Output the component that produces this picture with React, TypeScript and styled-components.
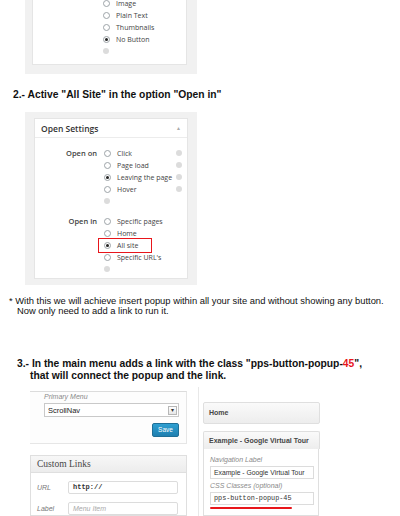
import styled, { createGlobalStyle } from 'styled-components'

const GlobalStyle = createGlobalStyle`
  html, body {
    margin: 0;
    padding: 0;
    background: #ffffff;
  }
  body {
    font-family: "Liberation Sans", Arial, sans-serif;
    color: #111;
  }
`

const Page = styled.div`
  width: 400px;
  height: 516px;
  overflow: hidden;
  background: #fff;
`

// gray frame around each captured admin screenshot
const Frame = styled.div<{ $pad: string; $top?: number }>`
  width: 172px;
  box-sizing: border-box;
  margin-left: 25px;
  margin-top: ${p => p.$top ?? 0}px;
  padding: ${p => p.$pad};
  background: #f1f1f1;
`

const Panel = styled.div<{ $cropped?: boolean }>`
  background: #fff;
  border: 1px solid #e5e5e5;
  border-top: ${p => (p.$cropped ? 'none' : '1px solid #e5e5e5')};
  font-family: "Open Sans", "Noto Sans", sans-serif;
  color: #444;
`

const OptionList = styled.div`
  padding: 0 0 7px 70px;
`

const Row = styled.div<{ $h?: number }>`
  display: flex;
  align-items: center;
  height: ${p => p.$h ?? 12}px;
  font-size: 7px;
`

const Radio = styled.span<{ $checked?: boolean }>`
  flex: none;
  width: 7px;
  height: 7px;
  box-sizing: border-box;
  border-radius: 50%;
  border: 1px solid #9da3a8;
  background: #fff;
  display: inline-flex;
  align-items: center;
  justify-content: center;
  &::after {
    content: '';
    width: 3px;
    height: 3px;
    border-radius: 50%;
    background: ${p => (p.$checked ? '#222' : 'transparent')};
  }
`

const Choice = styled.span<{ $marked?: boolean }>`
  position: relative;
  display: inline-flex;
  align-items: center;
  gap: 6px;
  white-space: nowrap;
  ${p =>
    p.$marked &&
    `
    &::before {
      content: '';
      position: absolute;
      left: -6px;
      right: -14px;
      top: -3px;
      bottom: -3px;
      border: 1.5px solid #e8161b;
    }
  `}
`

const Help = styled.span<{ $push?: boolean }>`
  flex: none;
  width: 6px;
  height: 6px;
  border-radius: 50%;
  background: #dcdcdc;
  margin-left: ${p => (p.$push ? 'auto' : '0')};
`

const PanelHead = styled.div`
  display: flex;
  align-items: center;
  justify-content: space-between;
  height: 18px;
  padding: 0 6px;
  border-bottom: 1px solid #ececec;
  font-size: 8.5px;
  font-weight: 600;
  color: #333;
`

const Caret = styled.span`
  font-size: 5px;
  color: #aaa;
`

const PanelBody = styled.div`
  padding: 9px 5px 3px 0;
`

const Group = styled.div<{ $gap?: number }>`
  display: grid;
  grid-template-columns: 62px 1fr;
  column-gap: 7px;
  margin-top: ${p => p.$gap ?? 0}px;
`

const GroupLabel = styled.div`
  text-align: right;
  font-size: 7.5px;
  font-weight: 600;
  color: #444;
  line-height: 12px;
`

const Heading = styled.div<{ $top: number }>`
  margin-top: ${p => p.$top}px;
  padding-left: 30px;
  text-indent: -13px;
  font-size: 10.3px;
  line-height: 12px;
  font-weight: 700;
  color: #111;
`

const StepTitle = styled.div`
  margin-top: 14px;
  padding-left: 13px;
  font-size: 10.3px;
  line-height: 14px;
  font-weight: 700;
  color: #111;
`

const Note = styled.div`
  margin-top: 11px;
  padding-left: 17px;
  text-indent: -8px;
  font-size: 9.4px;
  line-height: 9.5px;
  color: #111;
  white-space: nowrap;
`

const Red = styled.span`
  color: #e8161b;
`

const Bottom = styled.div`
  display: flex;
  margin-top: 5px;
  height: 140px;
`

const LeftCol = styled.div`
  width: 157px;
  margin-left: 30px;
  font-family: "Liberation Sans", Arial, sans-serif;
`

const MenuBox = styled.div`
  margin-top: 4px;
  border-top: 1px solid #dcdcdc;
  border-right: 1px solid #e6e6e6;
  border-bottom: 1px solid #e6e6e6;
  padding: 1px 7px 6px 14px;
  background: #fdfdfd;
  display: flex;
  flex-direction: column;
`

const SmallLabel = styled.div<{ $italic?: boolean }>`
  font-size: 7px;
  line-height: 8px;
  font-style: ${p => (p.$italic ? 'italic' : 'normal')};
  color: #8a8a8a;
  white-space: nowrap;
`

const Select = styled.div`
  display: flex;
  align-items: center;
  justify-content: space-between;
  height: 12px;
  margin-top: 2px;
  padding: 0 1px 0 3px;
  border: 1px solid #c9c9c9;
  background: #fff;
  font-size: 7.5px;
  color: #222;
`

const SelectArrow = styled.span`
  width: 9px;
  height: 9px;
  border: 1px solid #b7b7b7;
  box-sizing: border-box;
  background: linear-gradient(#fff, #e6e6e6);
  font-size: 6px;
  line-height: 7px;
  text-align: center;
  color: #333;
`

const SaveButton = styled.div`
  align-self: flex-end;
  margin-top: 6px;
  width: 27px;
  height: 14px;
  border-radius: 2px;
  border: 1px solid #1f6f97;
  box-sizing: border-box;
  background: linear-gradient(#2e9fd1, #1f7fb0);
  color: #fff;
  font-size: 6.5px;
  line-height: 12px;
  text-align: center;
`

const LinksBox = styled.div`
  margin-top: 11px;
  border: 1px solid #dfdfdf;
  background: #fff;
`

const LinksHead = styled.div`
  height: 16px;
  padding-left: 6px;
  background: linear-gradient(#f7f7f7, #ececec);
  border-bottom: 1px solid #dfdfdf;
  font-family: "Liberation Serif", "DejaVu Serif", serif;
  font-size: 9.5px;
  line-height: 16px;
  color: #464646;
`

const FieldRow = styled.div`
  display: flex;
  align-items: center;
  margin-top: 8px;
  padding-left: 6px;
  padding-right: 8px;
`

const FieldLabel = styled.span`
  width: 31px;
  font-size: 7px;
  font-style: italic;
  color: #777;
`

const Input = styled.div<{ $mono?: boolean; $placeholder?: boolean }>`
  flex: 1;
  height: 13px;
  box-sizing: border-box;
  border: 1px solid #dcdcdc;
  border-radius: 2px;
  background: #fff;
  padding-left: 4px;
  white-space: nowrap;
  overflow: hidden;
  font-family: ${p =>
    p.$mono ? '"Liberation Mono", "DejaVu Sans Mono", monospace' : '"Liberation Sans", Arial, sans-serif'};
  font-weight: ${p => (p.$mono ? 700 : 400)};
  font-style: ${p => (p.$placeholder ? 'italic' : 'normal')};
  font-size: 7px;
  line-height: 11px;
  color: ${p => (p.$placeholder ? '#aaa' : '#333')};
`

const RightCol = styled.div`
  width: 122px;
  margin-left: 11px;
  border-left: 1px solid #e8e8e8;
  padding-left: 4px;
  box-sizing: border-box;
  font-family: "Liberation Sans", Arial, sans-serif;
`

const MenuItem = styled.div<{ $top: number; $open?: boolean }>`
  margin-top: ${p => p.$top}px;
  height: ${p => (p.$open ? 18 : 22)}px;
  box-sizing: border-box;
  border: 1px solid #dfdfdf;
  border-bottom: ${p => (p.$open ? 'none' : '1px solid #dfdfdf')};
  border-radius: 2px 2px ${p => (p.$open ? '0 0' : '2px 2px')};
  background: linear-gradient(#fafafa, #ededed);
  padding-left: 5px;
  font-size: 7px;
  font-weight: 700;
  line-height: ${p => (p.$open ? 17 : 20)}px;
  color: #464646;
  white-space: nowrap;
`

const ItemSettings = styled.div`
  border: 1px solid #dfdfdf;
  border-top: none;
  background: #fff;
  padding: 7px 4px 10px 6px;
  margin-right: 1px;
`

const SettingLabel = styled(SmallLabel)`
  margin-top: 3px;
  &:first-child {
    margin-top: 0;
  }
`

const SettingInput = styled(Input)`
  margin-top: 2px;
  height: 13px;
  padding-left: 3px;
  border-radius: 0;
  font-weight: 400;
  font-size: 6.8px;
`

const Underlined = styled.div`
  position: relative;
  &::after {
    content: '';
    position: absolute;
    left: 0;
    bottom: -4px;
    width: 82px;
    height: 2px;
    border-radius: 1px;
    background: #e8161b;
  }
`

type Opt = { label: string; checked?: boolean; help?: boolean; marked?: boolean }

const openOn: Opt[] = [
  { label: 'Click', help: true },
  { label: 'Page load', help: true },
  { label: 'Leaving the page', checked: true, help: true },
  { label: 'Hover', help: true },
]

const openIn: Opt[] = [
  { label: 'Specific pages' },
  { label: 'Home' },
  { label: 'All site', checked: true, marked: true },
  { label: "Specific URL's" },
]

function OptionRows({ items }: { items: Opt[] }) {
  return (
    <div>
      {items.map(o => (
        <Row key={o.label}>
          <Choice $marked={o.marked}>
            <Radio $checked={o.checked} />
            {o.label}
          </Choice>
          {o.help && <Help $push />}
        </Row>
      ))}
      <Row>
        <Help />
      </Row>
    </div>
  )
}

export default function App() {
  return (
    <Page>
      <GlobalStyle />

      <Frame $pad="0 10px 9px 7px" $top={-3}>
        <Panel $cropped>
          <OptionList>
            <Row><Choice><Radio />Image</Choice></Row>
            <Row><Choice><Radio />Plain Text</Choice></Row>
            <Row><Choice><Radio />Thumbnails</Choice></Row>
            <Row><Choice><Radio $checked />No Button</Choice></Row>
            <Row><Help /></Row>
          </OptionList>
        </Panel>
      </Frame>

      <StepTitle>2.- Active "All Site" in the option "Open in"</StepTitle>

      <Frame $pad="6px 9px 6px 9px" $top={10}>
        <Panel>
          <PanelHead>
            Open Settings
            <Caret>▲</Caret>
          </PanelHead>
          <PanelBody>
            <Group>
              <GroupLabel>Open on</GroupLabel>
              <OptionRows items={openOn} />
            </Group>
            <Group $gap={8}>
              <GroupLabel>Open in</GroupLabel>
              <OptionRows items={openIn} />
            </Group>
          </PanelBody>
        </Panel>
      </Frame>

      <Note>
        * With this we will achieve insert popup within all your site and without showing any button.
        <br />
        Now only need to add a link to run it.
      </Note>

      <Heading $top={43}>
        3.- In the main menu adds a link with the class "pps-button-popup-<Red>45</Red>",
        <br />
        that will connect the popup and the link.
      </Heading>

      <Bottom>
        <LeftCol>
          <MenuBox>
            <SmallLabel $italic>Primary Menu</SmallLabel>
            <Select>
              ScrollNav
              <SelectArrow>▾</SelectArrow>
            </Select>
            <SaveButton>Save</SaveButton>
          </MenuBox>
          <LinksBox>
            <LinksHead>Custom Links</LinksHead>
            <FieldRow>
              <FieldLabel>URL</FieldLabel>
              <Input $mono>http://</Input>
            </FieldRow>
            <FieldRow>
              <FieldLabel>Label</FieldLabel>
              <Input $placeholder>Menu Item</Input>
            </FieldRow>
          </LinksBox>
        </LeftCol>

        <RightCol>
          <MenuItem $top={15}>Home</MenuItem>
          <MenuItem $top={7} $open>Example - Google Virtual Tour</MenuItem>
          <ItemSettings>
            <SettingLabel $italic>Navigation Label</SettingLabel>
            <SettingInput>Example - Google Virtual Tour</SettingInput>
            <SettingLabel $italic>CSS Classes (optional)</SettingLabel>
            <Underlined>
              <SettingInput $mono>pps-button-popup-45</SettingInput>
            </Underlined>
          </ItemSettings>
        </RightCol>
      </Bottom>
    </Page>
  )
}
